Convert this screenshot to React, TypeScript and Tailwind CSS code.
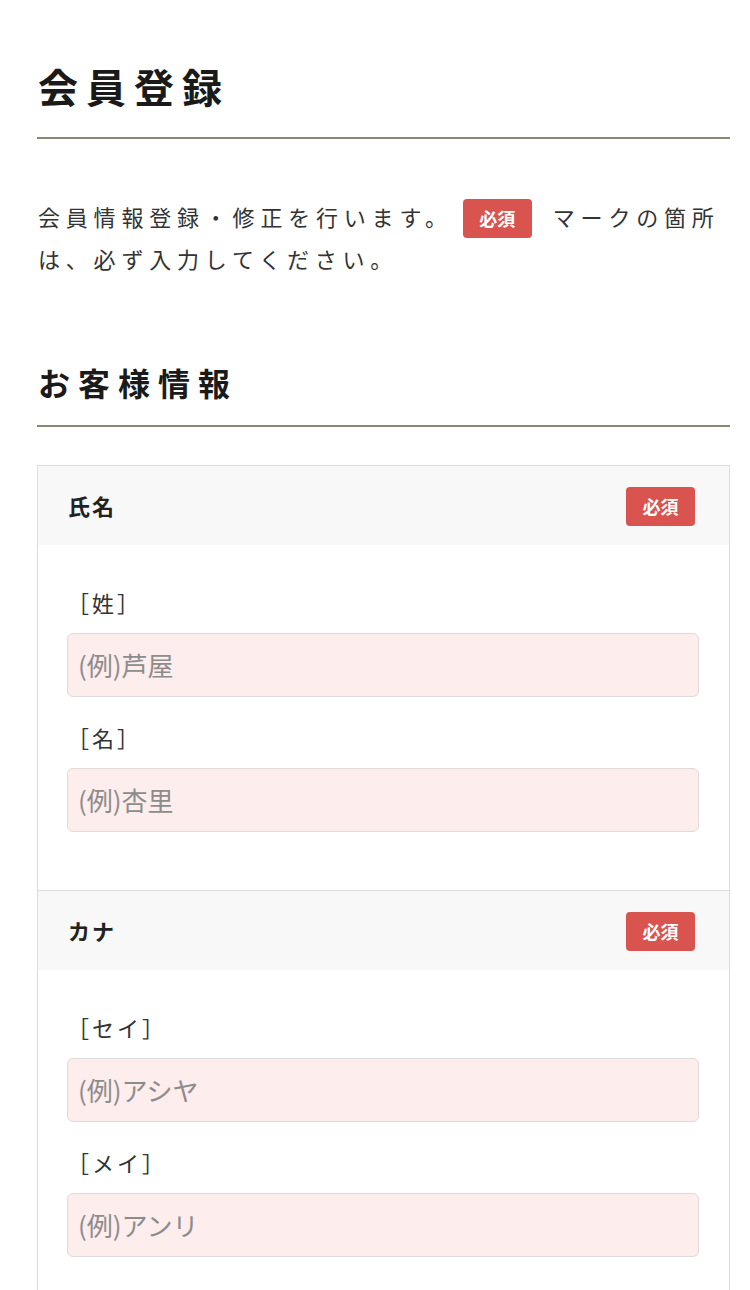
import React from "react";

const font = { fontFamily: '"Noto Sans CJK JP", "Noto Sans", sans-serif' };

function Badge({ className = "" }: { className?: string }) {
  return (
    <span
      className={`inline-flex items-center justify-center w-[69px] h-[39px] rounded-[4px] bg-[#d9534f] text-white text-[18px] font-bold leading-none tracking-normal ${className}`}
    >
      必須
    </span>
  );
}

function Field({ label, placeholder, first }: { label: string; placeholder: string; first?: boolean }) {
  return (
    <div className={first ? "" : "mt-[20px]"}>
      <div className="text-[22px] leading-[40px] text-[#333] tracking-[3px]">{label}</div>
      <input
        placeholder={placeholder}
        className="mt-[11px] block w-full h-[64px] rounded-[6px] border border-[#e2d9d9] bg-[#fdeded] px-[10px] text-[26px] text-[#333] placeholder:text-[#8c8c8c] outline-none"
        style={font}
      />
    </div>
  );
}

function Section({
  title,
  fields,
  top,
}: {
  title: string;
  fields: { label: string; placeholder: string }[];
  top?: boolean;
}) {
  return (
    <div className={top ? "" : "border-t border-[#dddddd]"}>
      <div className="h-[79px] bg-[#f8f8f8] flex items-center justify-between pl-[30px] pr-[34px]">
        <span className="text-[22px] font-bold text-[#222] tracking-[2px]">{title}</span>
        <Badge className="mt-[2px]" />
      </div>
      <div className="pt-[37px] pb-[58px] pl-[29px] pr-[30px]">
        {fields.map((f, i) => (
          <Field key={f.label} label={f.label} placeholder={f.placeholder} first={i === 0} />
        ))}
      </div>
    </div>
  );
}

export default function App() {
  return (
    <div className="w-[750px] min-h-[1290px] bg-white overflow-hidden" style={font}>
      <div className="ml-[37px] w-[693px]">
        <h1 className="mt-[58px] text-[40px] leading-[56px] font-bold text-[#1a1a1a] tracking-[8px] pb-[23px] border-b-2 border-[#8d8676] pl-px">
          会員登録
        </h1>
        <p className="mt-[57px] text-[22px] leading-[40px] text-[#333] tracking-[5.8px] pl-px whitespace-nowrap">
          会員情報登録・修正を行います。
          <Badge className="ml-[10px] mr-[21px] align-middle -mt-[4px]" />
          マークの箇所
          <br />
          は、必ず入力してください。
        </p>
        <h2 className="mt-[80px] text-[32px] leading-[48px] font-bold text-[#1a1a1a] tracking-[8px] pb-[19px] border-b-2 border-[#8d8676] pl-px">
          お客様情報
        </h2>
        <div className="mt-[38px] border border-[#dddddd]">
          <Section
            top
            title="氏名"
            fields={[
              { label: "［姓］", placeholder: "(例)芦屋" },
              { label: "［名］", placeholder: "(例)杏里" },
            ]}
          />
          <Section
            title="カナ"
            fields={[
              { label: "［セイ］", placeholder: "(例)アシヤ" },
              { label: "［メイ］", placeholder: "(例)アンリ" },
            ]}
          />
        </div>
      </div>
    </div>
  );
}
